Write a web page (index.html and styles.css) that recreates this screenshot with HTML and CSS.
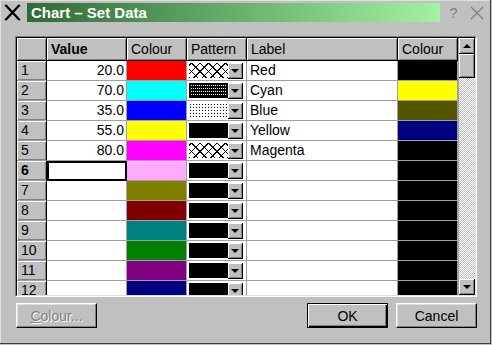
FILE: index.html
```html
<!DOCTYPE html>
<html>
<head>
<meta charset="utf-8">
<title>Chart – Set Data</title>
<link rel="stylesheet" href="styles.css">
</head>
<body>
<div class="window">
  <div class="titlebar">
    <svg class="appicon" width="19" height="19" viewBox="0 0 19 19">
      <path d="M2 2 L16 17 M3 2 L17 17 M16 2 L2 17 M17 2 L3 17" stroke="#000" stroke-width="1.6" fill="none"/>
    </svg>
    <div class="title">Chart – Set Data</div>
    <div class="tbtn help">?</div>
    <svg class="tbtn close" width="18" height="18" viewBox="0 0 18 18">
      <path d="M3 3 L15 15 M15 3 L3 15" stroke="#808080" stroke-width="1.3" fill="none"/>
    </svg>
  </div>
  <div class="content">
    <div class="frame">
      <div class="frame-inner">
        <div class="grid">
          <div class="hc corner"></div>
          <div class="hc bold">Value</div>
          <div class="hc">Colour</div>
          <div class="hc">Pattern</div>
          <div class="hc">Label</div>
          <div class="hc">Colour</div>

          <div class="rh">1</div><div class="v">20.0</div><div class="c" style="background:#ff0000"></div><div class="p"><div class="combo"><div class="sw pat-x"></div><div class="drop"><i></i></div></div></div><div class="l">Red</div><div class="c2" style="background:#000000"></div>
          <div class="rh">2</div><div class="v">70.0</div><div class="c" style="background:#00ffff"></div><div class="p"><div class="combo"><div class="sw pat-dense"></div><div class="drop"><i></i></div></div></div><div class="l">Cyan</div><div class="c2" style="background:#ffff00"></div>
          <div class="rh">3</div><div class="v">35.0</div><div class="c" style="background:#0000ff"></div><div class="p"><div class="combo"><div class="sw pat-sparse"></div><div class="drop"><i></i></div></div></div><div class="l">Blue</div><div class="c2" style="background:#555500"></div>
          <div class="rh">4</div><div class="v">55.0</div><div class="c" style="background:#ffff00"></div><div class="p"><div class="combo"><div class="sw pat-solid"></div><div class="drop"><i></i></div></div></div><div class="l">Yellow</div><div class="c2" style="background:#000080"></div>
          <div class="rh">5</div><div class="v">80.0</div><div class="c" style="background:#ff00ff"></div><div class="p"><div class="combo"><div class="sw pat-x"></div><div class="drop"><i></i></div></div></div><div class="l">Magenta</div><div class="c2" style="background:#000000"></div>
          <div class="rh bold">6</div><div class="v current"></div><div class="c" style="background:#ffaaff"></div><div class="p"><div class="combo"><div class="sw pat-solid"></div><div class="drop"><i></i></div></div></div><div class="l"></div><div class="c2" style="background:#000000"></div>
          <div class="rh">7</div><div class="v"></div><div class="c" style="background:#808000"></div><div class="p"><div class="combo"><div class="sw pat-solid"></div><div class="drop"><i></i></div></div></div><div class="l"></div><div class="c2" style="background:#000000"></div>
          <div class="rh">8</div><div class="v"></div><div class="c" style="background:#800000"></div><div class="p"><div class="combo"><div class="sw pat-solid"></div><div class="drop"><i></i></div></div></div><div class="l"></div><div class="c2" style="background:#000000"></div>
          <div class="rh">9</div><div class="v"></div><div class="c" style="background:#008080"></div><div class="p"><div class="combo"><div class="sw pat-solid"></div><div class="drop"><i></i></div></div></div><div class="l"></div><div class="c2" style="background:#000000"></div>
          <div class="rh">10</div><div class="v"></div><div class="c" style="background:#008000"></div><div class="p"><div class="combo"><div class="sw pat-solid"></div><div class="drop"><i></i></div></div></div><div class="l"></div><div class="c2" style="background:#000000"></div>
          <div class="rh">11</div><div class="v"></div><div class="c" style="background:#800080"></div><div class="p"><div class="combo"><div class="sw pat-solid"></div><div class="drop"><i></i></div></div></div><div class="l"></div><div class="c2" style="background:#000000"></div>
          <div class="rh">12</div><div class="v"></div><div class="c" style="background:#000080"></div><div class="p"><div class="combo"><div class="sw pat-solid"></div><div class="drop"><i></i></div></div></div><div class="l"></div><div class="c2" style="background:#000000"></div>
        </div>
        <div class="vscroll">
          <div class="sbtn"><i class="up"></i></div>
          <div class="thumb"></div>
          <div class="track"></div>
          <div class="sbtn"><i class="down"></i></div>
        </div>
      </div>
    </div>
    <div class="buttons">
      <button class="btn disabled"><u>C</u>olour...</button>
      <span class="spacer"></span>
      <button class="btn default">OK</button>
      <button class="btn">Cancel</button>
    </div>
  </div>
</div>
</body>
</html>
```

FILE: styles.css
```css
* { box-sizing: border-box; }
html, body { margin: 0; padding: 0; }
body {
  width: 492px;
  height: 345px;
  background: #c0c0c0;
  font-family: "Liberation Sans", Arial, sans-serif;
  font-size: 14px;
  color: #000;
  overflow: hidden;
}
.window {
  width: 491px;
  height: 344px;
  border-right: 1px solid #404040;
  border-bottom: 1px solid #404040;
  box-shadow: inset 1px 1px #dfdfdf;
}
.titlebar {
  display: flex;
  align-items: flex-start;
  height: 23px;
  padding-top: 3px;
}
.appicon { margin-left: 3px; flex: none; }
.title {
  margin-left: 5px;
  width: 413px;
  height: 19px;
  background: linear-gradient(90deg, #2f6a36 0%, #62a866 45%, #a2f2a2 100%);
  color: #fff;
  font-weight: bold;
  font-size: 15px;
  line-height: 19px;
  padding-left: 4px;
  white-space: nowrap;
}
.tbtn { flex: none; }
.help {
  width: 27px;
  text-align: center;
  color: #808080;
  font-size: 15px;
  line-height: 19px;
}
.close { margin-left: 1px; margin-top: 1px; }

.content { padding: 13px 0 0 15px; }
.frame {
  width: 462px;
  height: 261px;
  border: 1px solid;
  border-color: #808080 #ffffff #ffffff #808080;
}
.frame-inner {
  width: 460px;
  height: 259px;
  border: 1px solid;
  border-color: #000000 #dfdfdf #dfdfdf #000000;
  display: flex;
  overflow: hidden;
  background: #c0c0c0;
}
.grid {
  display: grid;
  grid-template-columns: 30px 80px 60px 60px 151px 60px;
  grid-template-rows: 23px;
  grid-auto-rows: 20px;
  width: 441px;
  height: 257px;
  overflow: hidden;
  align-content: start;
}
.grid > div {
  line-height: 19px;
  white-space: nowrap;
  overflow: hidden;
}
.hc {
  background: #c0c0c0;
  border-right: 1px solid #000;
  border-bottom: 1px solid #000;
  box-shadow: inset 1px 1px #fff, inset -1px -1px #808080;
  padding-left: 4px;
  line-height: 22px !important;
}
.bold { font-weight: bold; }
.rh {
  background: #c0c0c0;
  border-right: 1px solid #000;
  border-bottom: 1px solid #a0a0a0;
  box-shadow: inset 1px 1px #fff, inset -1px -1px #808080;
  padding-left: 4px;
}
.v, .c, .p, .l, .c2 {
  border-right: 1px solid #a0a0a0;
  border-bottom: 1px solid #a0a0a0;
}
.v { background: #fff; text-align: right; padding-right: 2px; }
.v.current { border: 2px solid #000; }
.l { background: #fff; padding-left: 3px; }
.p { background: #fff; padding: 2px 2px 0 1px; }
.combo {
  display: flex;
  height: 16px;
  align-items: stretch;
}
.sw {
  width: 39px;
  margin-left: 1px;
  height: 15px;
  border: 1px solid #000;
  background-color: #fff;
}
.pat-solid { background: #000; }
.pat-x {
  border: none;
  background-image:
    repeating-linear-gradient(45deg, #000 0 1px, transparent 1px 6px),
    repeating-linear-gradient(-45deg, #000 0 1px, transparent 1px 6px);
}
.pat-dense {
  background-color: #fff;
  background-image:
    linear-gradient(90deg, transparent 1px, #000 1px),
    linear-gradient(transparent 1px, #000 1px);
  background-size: 2px 3px;
  background-position: 1px 1px;
}
.pat-sparse {
  border: none;
  background-color: #000;
  background-image:
    linear-gradient(90deg, transparent 1px, #fff 1px),
    linear-gradient(transparent 1px, #fff 1px);
  background-size: 3px 3px;
  background-position: 1px 1px;
}
.drop {
  width: 15px;
  height: 16px;
  background: #c0c0c0;
  border-right: 1px solid #000;
  border-bottom: 1px solid #000;
  box-shadow: inset 1px 1px #fff, inset -1px -1px #808080;
  display: flex;
  align-items: center;
  justify-content: center;
}
.drop i, .sbtn i.down {
  display: block;
  width: 0; height: 0;
  border-left: 4px solid transparent;
  border-right: 4px solid transparent;
  border-top: 4px solid #000;
}
.sbtn i.up {
  display: block;
  width: 0; height: 0;
  border-left: 4px solid transparent;
  border-right: 4px solid transparent;
  border-bottom: 4px solid #000;
}
.vscroll {
  width: 17px;
  height: 257px;
  display: flex;
  flex-direction: column;
  border-left: 1px solid #a0a0a0;
}
.sbtn, .thumb {
  flex: none;
  width: 16px;
  background: #c0c0c0;
  border-right: 1px solid #000;
  border-bottom: 1px solid #000;
  box-shadow: inset 1px 1px #fff, inset -1px -1px #808080;
}
.sbtn {
  height: 16px;
  display: flex;
  align-items: center;
  justify-content: center;
}
.thumb { height: 24px; }
.track {
  flex: 1;
  background-image: conic-gradient(#fff 25%, #c0c0c0 0 50%, #fff 0 75%, #c0c0c0 0);
  background-size: 2px 2px;
}

.buttons {
  display: flex;
  width: 462px;
  margin-top: 6px;
  padding-left: 1px;
}
.spacer { flex: 1; }
.btn {
  width: 81px;
  height: 25px;
  font-family: "Liberation Sans", Arial, sans-serif;
  font-size: 14px;
  background: #c0c0c0;
  color: #000;
  border: 1px solid;
  border-color: #fff #000 #000 #fff;
  box-shadow: inset -1px -1px #808080, inset 1px 1px #dfdfdf;
  padding: 0;
  margin: 0;
}
.btn + .btn { margin-left: 8px; }
.btn.default {
  border-color: #000;
  box-shadow: inset 1px 1px #fff, inset -1px -1px #000, inset -2px -2px #808080;
}
.btn.disabled {
  color: #808080;
  text-shadow: 1px 1px #fff;
}
```
